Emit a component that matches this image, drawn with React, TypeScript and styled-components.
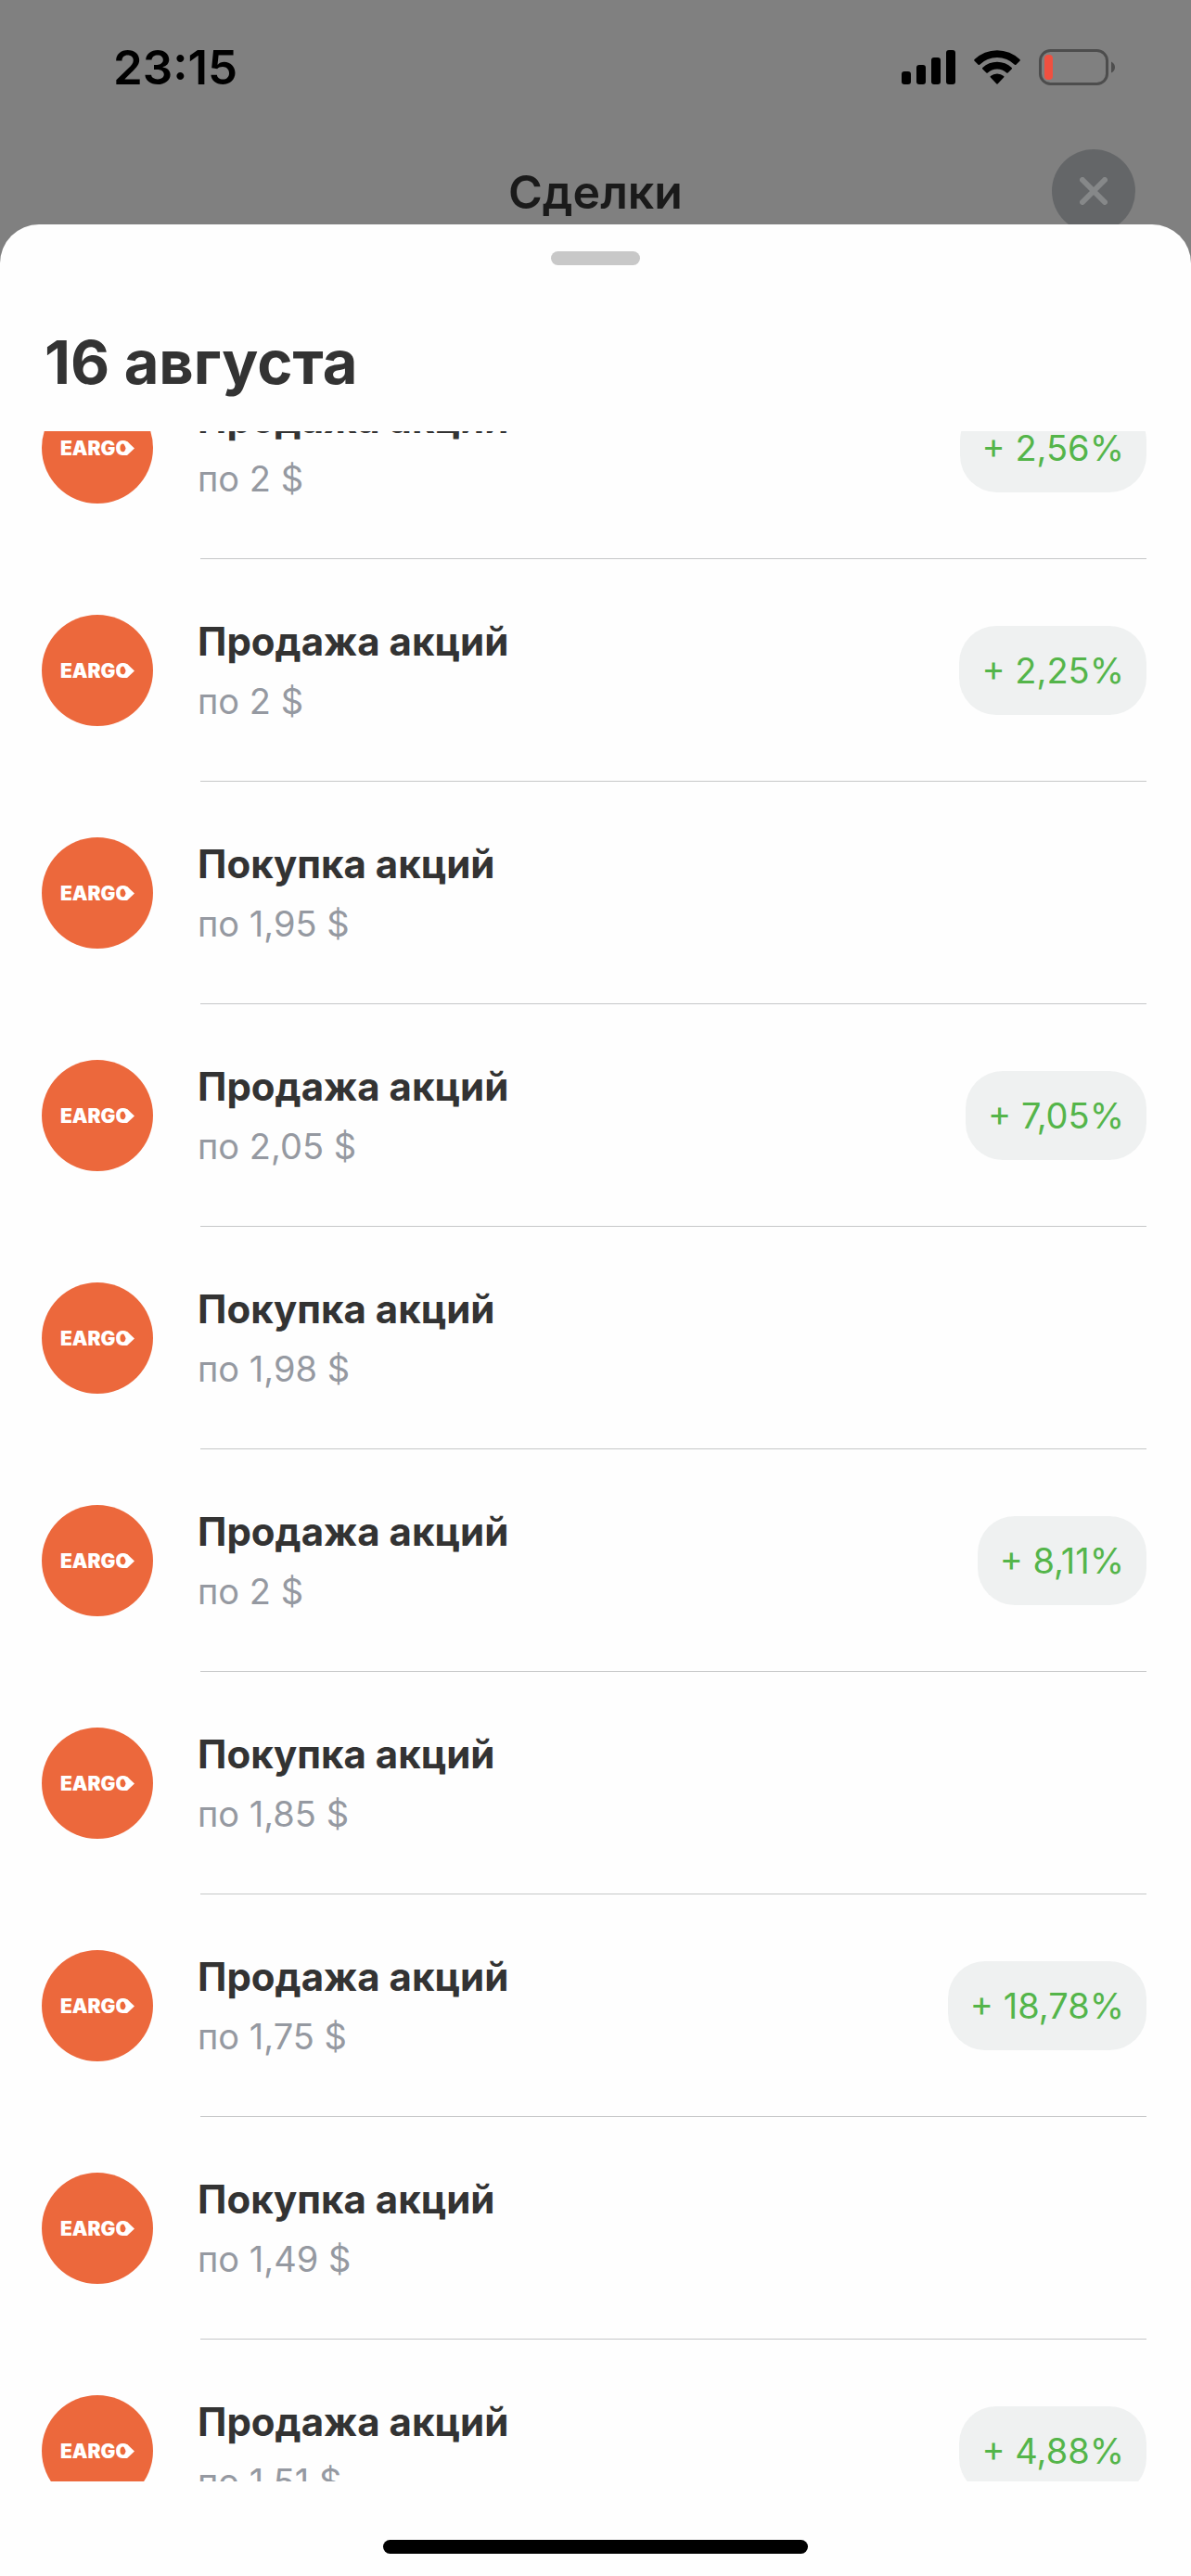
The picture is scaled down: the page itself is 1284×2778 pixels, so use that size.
import { useLayoutEffect, useRef } from "react";
import styled, { createGlobalStyle } from "styled-components";

const GlobalStyle = createGlobalStyle`
  * { box-sizing: border-box; }
  body {
    margin: 0;
    background: #808080;
    font-family: Inter, "Liberation Sans", sans-serif;
  }
`;

const Screen = styled.div`
  display: flex;
  flex-direction: column;
  height: 100vh;
  overflow: hidden;
  background: #808080;
`;

const StatusBar = styled.div`
  flex: none;
  display: flex;
  align-items: center;
  justify-content: space-between;
  height: 144px;
  padding: 2px 82px 0 122px;
`;

const Clock = styled.time`
  font-size: 51px;
  line-height: 60px;
  font-weight: 600;
  color: #000;
`;

const StatusIcons = styled.div`
  display: flex;
  align-items: center;
  gap: 20px;

  svg {
    display: block;
  }
`;

const NavBar = styled.header`
  flex: none;
  display: grid;
  grid-template-columns: 90px 1fr 90px;
  align-items: center;
  height: 124px;
  padding: 0 60px;
`;

const NavTitle = styled.h1`
  grid-column: 2;
  margin: 0;
  padding-top: 2px;
  text-align: center;
  font-size: 50px;
  line-height: 60px;
  font-weight: 600;
  color: #1a1a1a;
`;

const CloseButton = styled.button`
  display: grid;
  place-items: center;
  width: 90px;
  height: 90px;
  padding: 0;
  border: 0;
  border-radius: 50%;
  background: #646668;
`;

const Sheet = styled.main`
  position: relative;
  flex: 1;
  min-height: 0;
  display: flex;
  flex-direction: column;
  margin-top: -26px;
  padding-top: 29px;
  border-radius: 42px 42px 0 0;
  background: #fefefe;
`;

const Handle = styled.div`
  flex: none;
  align-self: center;
  width: 96px;
  height: 15px;
  border-radius: 8px;
  background: #c8c8c8;
`;

const DayTitle = styled.h2`
  flex: none;
  margin: 0;
  padding: 67px 48px 36px;
  font-size: 65px;
  line-height: 76px;
  font-weight: 700;
  color: #333;
`;

const DealList = styled.ul`
  flex: 1;
  min-height: 0;
  margin: 0;
  padding: 0;
  list-style: none;
  overflow-y: auto;
  scrollbar-width: none;
`;

const DealItem = styled.li`
  padding: 0 48px 0 45px;
`;

const DealRow = styled.div`
  display: flex;
  align-items: center;
  height: 239px;
  padding-top: 1px;
`;

const Divider = styled.div`
  height: 1px;
  margin-left: 171px;
  background: #c6c7c8;
`;

const DealText = styled.div`
  flex: 1;
  min-width: 0;
  padding: 2px 0 0 48px;
`;

const DealName = styled.div`
  font-size: 42px;
  line-height: 64px;
  font-weight: 700;
  color: #333;
`;

const DealPrice = styled.div`
  font-size: 38px;
  line-height: 64px;
  color: #9599a1;
`;

const Badge = styled.span`
  padding: 0 24px;
  border-radius: 40px;
  font-size: 38px;
  line-height: 96px;
  background: #eff1f1;
  color: #54b54a;
`;

const Logo = styled.svg`
  flex: none;
  display: block;

  text {
    font-family: Inter, "Liberation Sans", sans-serif;
    font-size: 21px;
    font-weight: 900;
    fill: #fff;
  }
`;

const HomeArea = styled.footer`
  flex: none;
  display: flex;
  justify-content: center;
  align-items: flex-end;
  height: 102px;
  padding-bottom: 24px;
`;

const HomeIndicator = styled.div`
  width: 458px;
  height: 15px;
  border-radius: 8px;
  background: #000;
`;

const SignalIcon = () => (
  <svg width="58" height="38" viewBox="0 0 58 38" aria-hidden="true">
    <rect x="0" y="23" width="10" height="14" rx="3" />
    <rect x="16" y="16" width="10" height="21" rx="3" />
    <rect x="32" y="8" width="10" height="29" rx="3" />
    <rect x="48" y="0" width="10" height="37" rx="3" />
  </svg>
);

const WifiIcon = () => (
  <svg width="50" height="38" viewBox="0 0 50 38" aria-hidden="true">
    <path d="M0.6 10.1a35 35 0 0 1 48.8 0q.8.8 0 1.600l-4 4q-.7.7-1.500 0a27 27 0 0 0-37.800 0q-.8.7-1.500 0l-4-4q-.8-.8 0-1.600z" />
    <path d="M9.300 18.900a23 23 0 0 1 31.400 0q.8.8 0 1.600l-4.100 4q-.7.7-1.500 0a15 15 0 0 0-20.200 0q-.8.7-1.500 0l-4.100-4q-.8-.8 0-1.600z" />
    <path d="M17.900 28a11 11 0 0 1 14.200 0q.9.8 0 1.600l-6.300 6.700q-.8.800-1.600 0l-6.300-6.700q-.9-.8 0-1.600z" />
  </svg>
);

const BatteryIcon = () => (
  <svg width="82" height="40" viewBox="0 0 82 40" aria-hidden="true">
    <rect x="1.500" y="1.500" width="72" height="36" rx="11" fill="none" stroke="#4d4d4d" strokeWidth="3" />
    <rect x="6" y="6" width="9" height="27" rx="4" fill="#f05040" />
    <path d="M78 13.500q4 2 4 6t-4 6z" fill="#4d4d4d" />
  </svg>
);

const CloseIcon = () => (
  <svg width="30" height="30" viewBox="0 0 30 30" aria-hidden="true">
    <path d="M3 3l24 24M27 3L3 27" stroke="#868889" strokeWidth="6" strokeLinecap="round" />
  </svg>
);

const EargoLogo = () => (
  <Logo width="120" height="120" viewBox="0 0 120 120" role="img" aria-label="EARGO">
    <circle cx="60" cy="60" r="60" fill="#ec683c" />
    <text x="20" y="68">EARGO</text>
    <path d="M87 53h5l8 7.500-8 7.500h-5l4-7.500z" fill="#fff" />
  </Logo>
);

type Deal = { name: string; price: string; gain?: string };

const deals: Deal[] = [
  { name: "Продажа акций", price: "по 2 $", gain: "+ 2,56%" },
  { name: "Продажа акций", price: "по 2 $", gain: "+ 2,25%" },
  { name: "Покупка акций", price: "по 1,95 $" },
  { name: "Продажа акций", price: "по 2,05 $", gain: "+ 7,05%" },
  { name: "Покупка акций", price: "по 1,98 $" },
  { name: "Продажа акций", price: "по 2 $", gain: "+ 8,11%" },
  { name: "Покупка акций", price: "по 1,85 $" },
  { name: "Продажа акций", price: "по 1,75 $", gain: "+ 18,78%" },
  { name: "Покупка акций", price: "по 1,49 $" },
  { name: "Продажа акций", price: "по 1,51 $", gain: "+ 4,88%" },
];

const INITIAL_SCROLL = 102;

export default function App() {
  const listRef = useRef<HTMLUListElement>(null);

  useLayoutEffect(() => {
    if (listRef.current) listRef.current.scrollTop = INITIAL_SCROLL;
  }, []);

  return (
    <Screen>
      <GlobalStyle />
      <StatusBar>
        <Clock>23:15</Clock>
        <StatusIcons>
          <SignalIcon />
          <WifiIcon />
          <BatteryIcon />
        </StatusIcons>
      </StatusBar>
      <NavBar>
        <NavTitle>Сделки</NavTitle>
        <CloseButton type="button" aria-label="Закрыть">
          <CloseIcon />
        </CloseButton>
      </NavBar>
      <Sheet>
        <Handle />
        <DayTitle>16 августа</DayTitle>
        <DealList ref={listRef}>
          {deals.map((deal, index) => (
            <DealItem key={index}>
              <DealRow>
                <EargoLogo />
                <DealText>
                  <DealName>{deal.name}</DealName>
                  <DealPrice>{deal.price}</DealPrice>
                </DealText>
                {deal.gain && <Badge>{deal.gain}</Badge>}
              </DealRow>
              <Divider />
            </DealItem>
          ))}
        </DealList>
        <HomeArea>
          <HomeIndicator />
        </HomeArea>
      </Sheet>
    </Screen>
  );
}
